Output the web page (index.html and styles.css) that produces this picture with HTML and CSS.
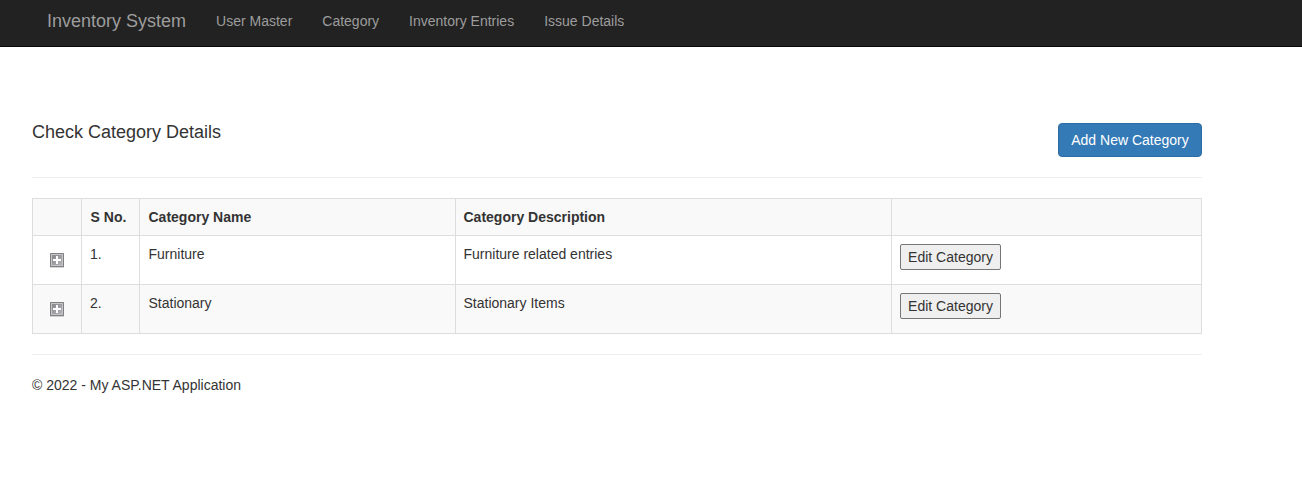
FILE: index.html
```html
<!DOCTYPE html>
<html lang="en">
<head>
<meta charset="utf-8">
<title>Check Category Details</title>
<link rel="stylesheet" href="styles.css">
</head>
<body>
<svg class="defs" width="0" height="0">
  <linearGradient id="face" x1="0" y1="0" x2="1" y2="1"><stop offset="0" stop-color="#88888c"/><stop offset="1" stop-color="#b4b4b8"/></linearGradient>
  <symbol id="plus" viewBox="0 0 16 16">
    <path fill="#000" fill-opacity=".16" d="M1 15h14v1H1z"/>
    <rect x="1" y="1" width="14" height="14" rx=".5" fill="#808082"/>
    <path fill="#c6c6c8" d="M2 2h12v12H2z"/>
    <path fill="url(#face)" d="M3 3h10v10H3z"/>
    <path fill="#fff" d="M7 4h2v3h3v2H9v3H7V9H4V7h3z"/>
  </symbol>
</svg>
<nav class="navbar">
  <a class="brand">Inventory System</a>
  <a class="nav-link">User Master</a>
  <a class="nav-link">Category</a>
  <a class="nav-link">Inventory Entries</a>
  <a class="nav-link">Issue Details</a>
</nav>
<main class="container">
  <header class="page-head">
    <h4 class="title">Check Category Details</h4>
    <button class="btn-primary">Add New Category</button>
  </header>
  <hr class="rule">
  <table class="table">
    <colgroup><col class="c1"><col class="c2"><col class="c3"><col class="c4"><col class="c5"></colgroup>
    <thead>
      <tr><th></th><th class="serial">S No.</th><th>Category Name</th><th class="desc">Category Description</th><th></th></tr>
    </thead>
    <tbody>
      <tr>
        <td class="toggle"><svg class="plus"><use href="#plus"/></svg></td>
        <td>1.</td><td class="name">Furniture</td><td class="desc">Furniture related entries</td><td><button class="edit">Edit Category</button></td>
      </tr>
      <tr class="striped">
        <td class="toggle"><svg class="plus"><use href="#plus"/></svg></td>
        <td>2.</td><td class="name">Stationary</td><td class="desc">Stationary Items</td><td><button class="edit">Edit Category</button></td>
      </tr>
    </tbody>
  </table>
  <hr class="rule">
  <footer class="footer">© 2022 - My ASP.NET Application</footer>
</main>
</body>
</html>
```
FILE: styles.css
```css
* { box-sizing: border-box; }
body { margin: 0; background: #fff; color: #333; font: 14px/20px "Liberation Sans", Arial, sans-serif; }
.defs { display: block; }
.navbar { display: flex; height: 47px; padding-left: 32px; background: #222; border-bottom: 1px solid #080808; color: #9d9d9d; }
.brand { padding: 11px 15px; font-size: 18px; }
.nav-link { padding: 11px 15px; }
.container { width: 1170px; margin-left: 32px; padding-top: 76px; }
.page-head { display: flex; justify-content: space-between; height: 54px; }
.title { margin: 0; font-size: 18px; font-weight: 500; line-height: 18px; }
.btn-primary { height: 34px; width: 144px; padding: 0; background: #337ab7; border: 1px solid #2e6da4; border-radius: 4px; color: #fff; font: inherit; }
.rule { margin: 0 0 20px; border: 0; border-top: 1px solid #eee; }
.table { width: 1170px; margin-bottom: 20px; table-layout: fixed; border-collapse: collapse; border: 1px solid #ddd; }
.c1 { width: 49px; }
.c2 { width: 58px; }
.c3 { width: 316px; }
.c4 { width: 436px; }
.table th, .table td { height: 49px; padding: 8px; border: 1px solid #ddd; text-align: left; vertical-align: top; }
.table thead th { height: 37px; background: #f9f9f9; }
.table .serial { padding-left: 8.6px; }
.table .name, .table th:nth-child(3) { padding-left: 8.5px; }
.table .desc { padding-left: 7.5px; }
.striped { background: #f9f9f9; }
.table .toggle { padding: 16px 0 0 16px; }
.plus { display: block; width: 16px; height: 16px; }
.edit { display: block; width: 101px; height: 26px; padding: 0; background: #efefef; border: 1px solid #767676; border-radius: 2px; color: #333; font: inherit; }
```
